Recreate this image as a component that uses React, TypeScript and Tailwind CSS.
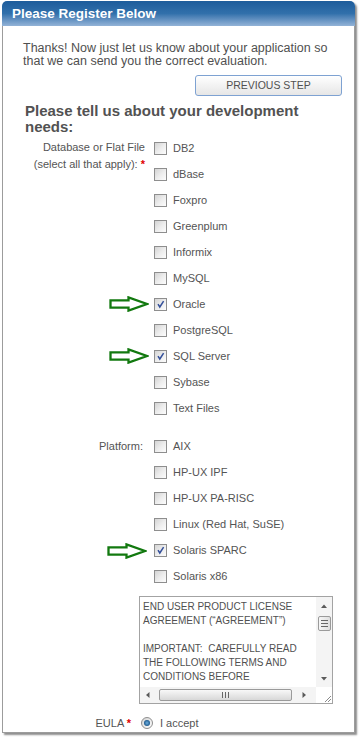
import React from "react";

const FONT = { fontFamily: '"Liberation Sans", Arial, Helvetica, sans-serif' };

function Box({ checked }: { checked?: boolean }) {
  return (
    <span className="relative inline-block w-[13px] h-[13px] shrink-0 border border-[#8e8e8e] bg-gradient-to-br from-[#d4d4d4] via-[#ececec] to-[#fdfdfd]">
      {checked && (
        <svg viewBox="0 0 11 11" className="absolute left-0 top-0 w-[11px] h-[11px]">
          <path d="M3 5.2 L4.8 8 L8.6 2.2" stroke="#34509a" strokeWidth="1.5" fill="none" />
        </svg>
      )}
    </span>
  );
}

function Arrow({ left, top }: { left: string; top: string }) {
  return (
    <svg
      width="40"
      height="16"
      viewBox="0 0 40 16"
      className={`absolute ${left} ${top}`}
    >
      <path
        d="M1.5 4.3 H19.5 V1.4 L38 8 L19.5 14.6 V11.7 H1.5 Z"
        fill="none"
        stroke="#12790f"
        strokeWidth="2.3"
      />
    </svg>
  );
}

function Option({ label, checked, arrow }: { label: string; checked?: boolean; arrow?: "a" | "b" }) {
  return (
    <div className="relative h-[26px] flex items-center">
      {arrow === "a" && <Arrow left="left-[-45px]" top="top-[5px]" />}
      {arrow === "b" && <Arrow left="left-[-47px]" top="top-[6px]" />}
      <Box checked={checked} />
      <span className="ml-[6px] text-[11px] text-[#545454]">{label}</span>
    </div>
  );
}

export default function App() {
  const dbs: { l: string; c?: boolean; a?: "a" | "b" }[] = [
    { l: "DB2" },
    { l: "dBase" },
    { l: "Foxpro" },
    { l: "Greenplum" },
    { l: "Informix" },
    { l: "MySQL" },
    { l: "Oracle", c: true, a: "a" },
    { l: "PostgreSQL" },
    { l: "SQL Server", c: true, a: "a" },
    { l: "Sybase" },
    { l: "Text Files" },
  ];
  const plats: { l: string; c?: boolean; a?: "a" | "b" }[] = [
    { l: "AIX" },
    { l: "HP-UX IPF" },
    { l: "HP-UX PA-RISC" },
    { l: "Linux (Red Hat, SuSE)" },
    { l: "Solaris SPARC", c: true, a: "b" },
    { l: "Solaris x86" },
  ];

  return (
    <div className="min-h-[737px] bg-white pt-[1px]" style={FONT}>
      <div className="ml-[2px] w-[353px] shadow-[2px_2px_2px_rgba(0,0,0,0.45)] rounded-t-[5px]">
        <div className="h-[25px] rounded-t-[5px] bg-gradient-to-b from-[#1d5c9b] via-[#3170ab] to-[#93b3d7] pl-[10px] flex items-center">
          <span className="text-white font-bold text-[13.5px] leading-none">Please Register Below</span>
        </div>
        <div className="border-x border-b border-[#9c9c9c] bg-white">
          <div className="pt-[16px] pl-[20px] w-[332px] text-[12.5px] leading-[13px] text-[#505050]">
            Thanks! Now just let us know about your application so that we can send you the correct evaluation.
          </div>
          <div className="flex justify-end mt-[7px] pr-[12px]">
            <div className="w-[147px] h-[21px] rounded-[3px] border border-[#7ea2d2] bg-gradient-to-b from-white to-[#e6e6e6] flex items-center justify-center text-[10.5px] text-[#505050]">
              PREVIOUS STEP
            </div>
          </div>
          <div className="mt-[7px] pl-[22px] w-[320px] text-[15px] leading-[16px] font-bold text-[#525252]">
            Please tell us about your development needs:
          </div>
          <div className="flex">
            <div className="w-[142px] shrink-0 text-right pt-[4px] text-[11px] leading-[17px] text-[#545454]">
              Database or Flat File
              <br />
              (select all that apply): <span className="text-[#e00000] font-bold">*</span>
            </div>
            <div className="ml-[9px]">
              {dbs.map((d) => (
                <Option key={d.l} label={d.l} checked={d.c} arrow={d.a} />
              ))}
            </div>
          </div>
          <div className="flex mt-[12px]">
            <div className="w-[142px] shrink-0 text-right pr-[2px] text-[11px] leading-[26px] text-[#545454]">
              Platform:
            </div>
            <div className="ml-[9px]">
              {plats.map((d) => (
                <Option key={d.l} label={d.l} checked={d.c} arrow={d.a} />
              ))}
            </div>
          </div>
          <div className="mt-[7px] ml-[136px] w-[194px] h-[108px] border border-[#a3a3a3] bg-white flex flex-col">
            <div className="flex flex-1">
              <div className="flex-1 pl-[3px] pt-[3px] text-[10px] leading-[14px] text-[#505050] overflow-hidden whitespace-nowrap">
                <div>END USER PRODUCT LICENSE</div>
                <div>AGREEMENT (“AGREEMENT”)</div>
                <div>&nbsp;</div>
                <div>IMPORTANT:&nbsp; CAREFULLY READ</div>
                <div>THE FOLLOWING TERMS AND</div>
                <div>CONDITIONS BEFORE</div>
              </div>
              <div className="w-[16px] bg-[#f4f4f4] flex flex-col items-center">
                <svg width="8" height="14" viewBox="0 0 8 14" className="mt-[2px]">
                  <path d="M1 9 L4 5.5 L7 9 Z" fill="#5a5a5a" />
                </svg>
                <div className="mt-[3px] w-[13px] h-[15px] rounded-[2px] border border-[#9a9a9a] bg-gradient-to-r from-[#f6f6f6] to-[#dedede] flex flex-col items-center justify-center gap-[2px]">
                  <span className="w-[7px] h-[1px] bg-[#666]" />
                  <span className="w-[7px] h-[1px] bg-[#666]" />
                  <span className="w-[7px] h-[1px] bg-[#666]" />
                </div>
                <div className="flex-1" />
                <svg width="8" height="14" viewBox="0 0 8 14" className="mb-[1px]">
                  <path d="M1 5 L4 8.5 L7 5 Z" fill="#5a5a5a" />
                </svg>
              </div>
            </div>
            <div className="h-[16px] flex bg-[#f4f4f4]">
              <div className="w-[16px] flex items-center justify-center">
                <svg width="8" height="8" viewBox="0 0 8 8">
                  <path d="M5.5 1 L2 4 L5.5 7 Z" fill="#5a5a5a" />
                </svg>
              </div>
              <div className="flex-1 flex items-center pl-[3px] pr-[24px]">
                <div className="w-full h-[12px] rounded-[2px] border border-[#9a9a9a] bg-gradient-to-b from-[#f8f8f8] to-[#d8d8d8] flex items-center justify-center gap-[2px]">
                  <span className="w-[1px] h-[6px] bg-[#666]" />
                  <span className="w-[1px] h-[6px] bg-[#666]" />
                  <span className="w-[1px] h-[6px] bg-[#666]" />
                </div>
              </div>
              <div className="w-[16px] flex items-center justify-center -ml-[20px] mr-[4px]">
                <svg width="8" height="8" viewBox="0 0 8 8">
                  <path d="M2.5 1 L6 4 L2.5 7 Z" fill="#5a5a5a" />
                </svg>
              </div>
              <div className="w-[16px] bg-white flex items-end justify-end">
                <svg width="10" height="10" viewBox="0 0 10 10">
                  <path d="M9 3 L3 9 M9 6 L6 9" stroke="#8a8a8a" strokeWidth="1" />
                </svg>
              </div>
            </div>
          </div>
          <div className="flex items-center h-[16px] mt-[11px] mb-[1px]">
            <div className="w-[128px] shrink-0 text-right text-[11px] text-[#545454]">
              EULA <span className="text-[#e00000] font-bold">*</span>
            </div>
            <span className="ml-[10px] w-[12px] h-[12px] rounded-full border border-[#8e8e8e] bg-gradient-to-br from-[#d4d4d4] to-white flex items-center justify-center">
              <span className="w-[6px] h-[6px] rounded-full bg-[radial-gradient(circle,#6fb0e0_0%,#1d5a8e_70%)]" />
            </span>
            <span className="ml-[7px] text-[11px] text-[#545454]">I accept</span>
          </div>
        </div>
      </div>
    </div>
  );
}
